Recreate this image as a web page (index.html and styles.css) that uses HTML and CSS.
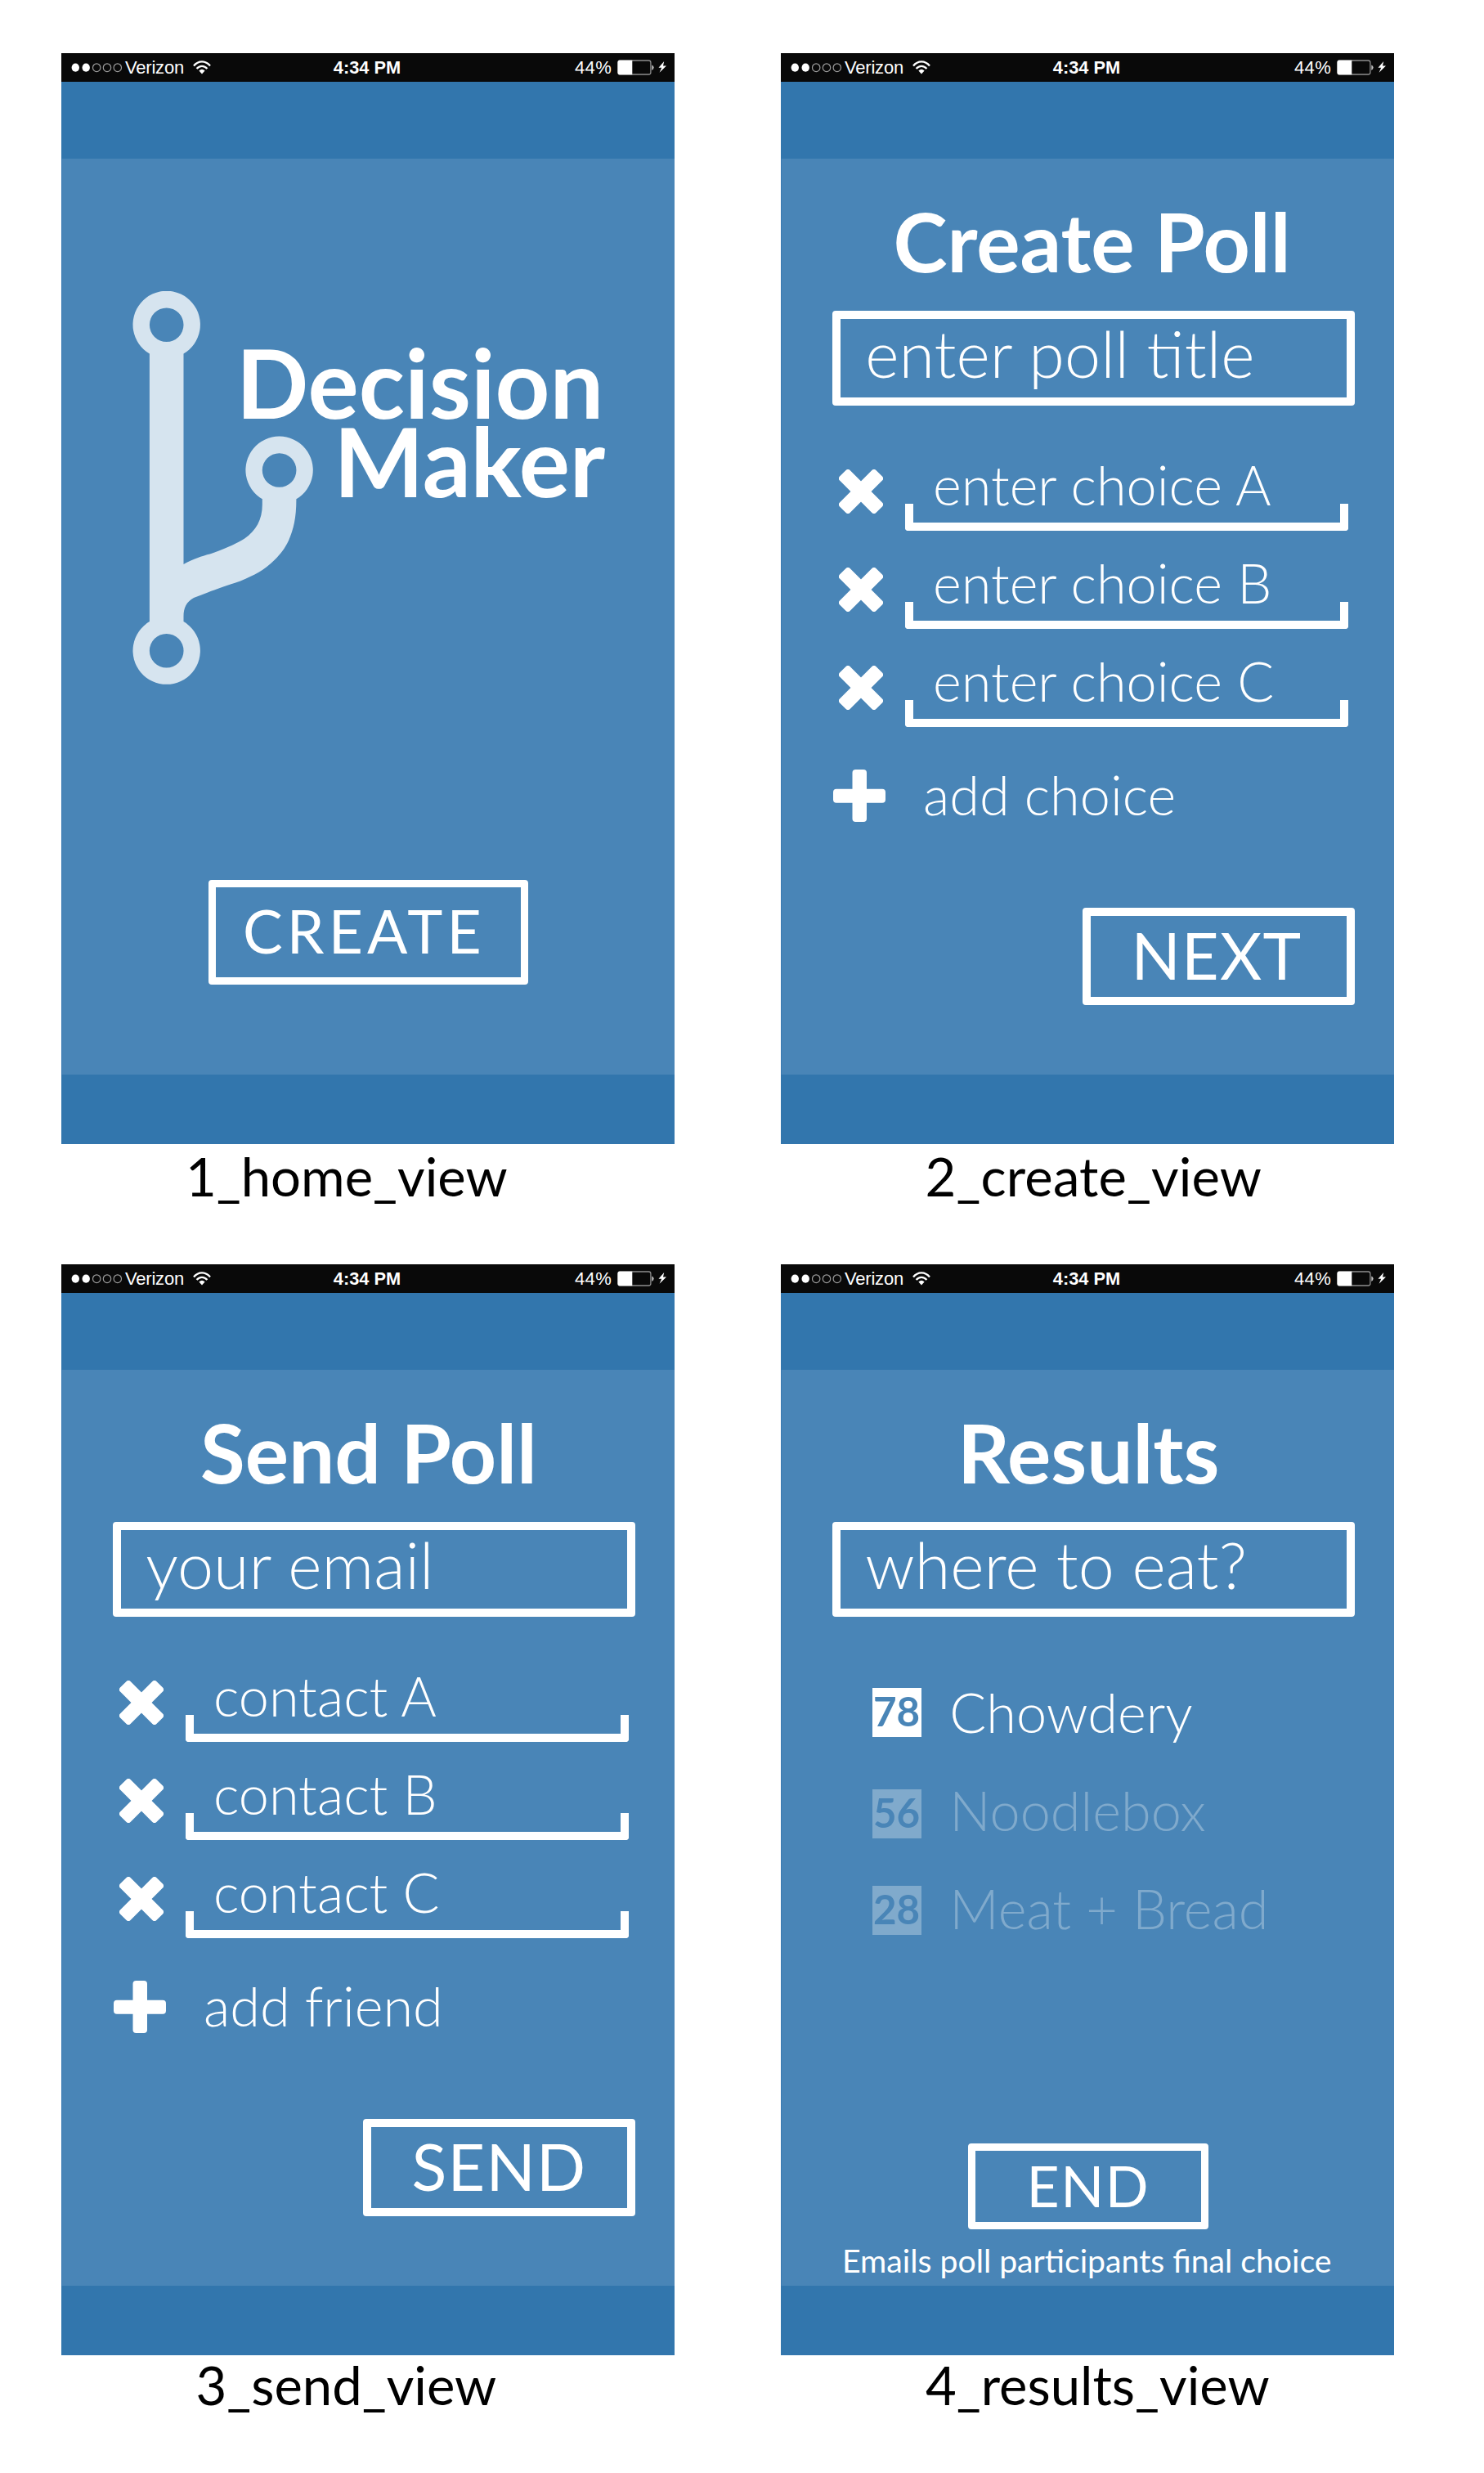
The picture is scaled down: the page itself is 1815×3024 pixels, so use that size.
FILE: index.html
```html
<!DOCTYPE html>
<html lang="en">
<head>
<meta charset="utf-8">
<title>Decision Maker views</title>
<link rel="stylesheet" href="styles.css">
</head>
<body>
<svg class="defs" aria-hidden="true">
  <symbol id="signal" viewBox="0 0 63 14">
    <g fill="#fff"><ellipse cx="5.3" cy="6.7" rx="4.7" ry="5.1"/><ellipse cx="18.2" cy="6.7" rx="4.7" ry="5.1"/></g>
    <g fill="none" stroke="#9c9c9c" stroke-width="1.2"><ellipse cx="31.2" cy="6.7" rx="4.700" ry="4.9"/><ellipse cx="44" cy="6.7" rx="4.7" ry="4.9"/><ellipse cx="56.8" cy="6.7" rx="4.7" ry="4.9"/></g>
  </symbol>
  <symbol id="wifi" viewBox="0 0 22 17">
    <g fill="none" stroke="#fff" stroke-width="2.3"><path d="M1 6.4C6.6-.4 15.4-.4 21 6.4"/><path d="M4.6 10.1C8.2 5.7 13.8 5.7 17.4 10.1"/></g>
    <path d="M7.4 12.4Q11 9.3 14.6 12.4L11 16.6Z" fill="#fff"/>
  </symbol>
  <symbol id="battery" viewBox="0 0 60 20">
    <rect x=".7" y="1" width="40.2" height="17" rx="2.5" fill="none" stroke="#8f8f8f" stroke-width="1.3"/>
    <path d="M2.5 .8H18.3V18.200H2.5Q.6 18.200.6 16V3Q.6 .8 2.5 .8Z" fill="#fff"/>
    <path d="M42.3 6.400Q44.6 7.400 44.6 9.600T42.300 12.900Z" fill="#c4c4c4"/>
    <path d="M57.200 2L50.500 9.700H54.200L51.600 15.800L60 7.400H56Z" fill="#fff"/>
  </symbol>
  <symbol id="remove" viewBox="0 0 54 54">
    <g fill="#fff"><rect x="-4.4" y="18.1" width="62.8" height="17.8" rx="3.5" transform="rotate(45 27 27)"/><rect x="-4.4" y="18.1" width="62.8" height="17.8" rx="3.5" transform="rotate(-45 27 27)"/></g>
  </symbol>
  <symbol id="add" viewBox="0 0 64 64">
    <g fill="#fff"><rect x="23.5" y="0" width="17.5" height="64" rx="4"/><rect x="0" y="23.7" width="64" height="17" rx="4"/></g>
  </symbol>
</svg>

<main class="board">
  <section class="view">
    <div class="phone">
      <div class="status"><div class="carrier"><svg class="signal"><use href="#signal"/></svg><span>Verizon</span><svg class="wifi"><use href="#wifi"/></svg></div><span class="time">4:34 PM</span><div class="power"><span>44%</span><svg class="battery"><use href="#battery"/></svg></div></div>
      <div class="topbar"></div>
      <div class="screen home">
        <div class="hero">
          <svg class="logo" viewBox="162 356 221 481">
            <path fill="#d6e4ef" fill-rule="evenodd" d="M182.900 432.500A41.200 41.200 0 1 1 224.500 432.500V690C240 681.500 251 679.500 262.400 675.500C279 669 291 664 299.200 658.500C313 648.500 320.800 636 320.800 617V610.300A41.200 41.200 0 1 1 362.400 610.300C362.400 634 359 647 353 661C348 671.500 343 677.500 336 684.500C322 698.500 312 702.500 294 710.500C270 718.500 253 724.500 237 731C228 736 224.500 743 224.500 754V760.100A41.200 41.200 0 1 1 182.900 760.100Z M203.700 376.500A20.800 20.800 0 1 0 203.700 418.100A20.800 20.800 0 1 0 203.700 376.500Z M341.600 554.200A20.800 20.800 0 1 0 341.600 595.800A20.800 20.800 0 1 0 341.600 554.200Z M203.700 775A20.800 20.800 0 1 0 203.700 816.600A20.800 20.800 0 1 0 203.700 775Z"/>
          </svg>
          <h1 class="brand"><span class="brand-a">Decision</span><span class="brand-b">Maker</span></h1>
        </div>
        <div class="button create">CREATE</div>
      </div>
      <div class="bottombar"></div>
    </div>
    <p class="caption c1">1_home_view</p>
  </section>

  <section class="view">
    <div class="phone">
      <div class="status"><div class="carrier"><svg class="signal"><use href="#signal"/></svg><span>Verizon</span><svg class="wifi"><use href="#wifi"/></svg></div><span class="time">4:34 PM</span><div class="power"><span>44%</span><svg class="battery"><use href="#battery"/></svg></div></div>
      <div class="topbar"></div>
      <div class="screen">
        <h2 class="title t-create">Create Poll</h2>
        <div class="field">enter poll title</div>
        <ul class="entries">
          <li class="entry"><svg class="remove"><use href="#remove"/></svg><div class="slot">enter choice A</div></li>
          <li class="entry"><svg class="remove"><use href="#remove"/></svg><div class="slot">enter choice B</div></li>
          <li class="entry"><svg class="remove"><use href="#remove"/></svg><div class="slot">enter choice C</div></li>
        </ul>
        <div class="add-row"><svg class="add"><use href="#add"/></svg><span>add choice</span></div>
        <div class="button forward">NEXT</div>
      </div>
      <div class="bottombar"></div>
    </div>
    <p class="caption c2">2_create_view</p>
  </section>

  <section class="view">
    <div class="phone">
      <div class="status"><div class="carrier"><svg class="signal"><use href="#signal"/></svg><span>Verizon</span><svg class="wifi"><use href="#wifi"/></svg></div><span class="time">4:34 PM</span><div class="power"><span>44%</span><svg class="battery"><use href="#battery"/></svg></div></div>
      <div class="topbar"></div>
      <div class="screen">
        <h2 class="title t-send">Send Poll</h2>
        <div class="field">your email</div>
        <ul class="entries">
          <li class="entry"><svg class="remove"><use href="#remove"/></svg><div class="slot">contact A</div></li>
          <li class="entry"><svg class="remove"><use href="#remove"/></svg><div class="slot">contact B</div></li>
          <li class="entry"><svg class="remove"><use href="#remove"/></svg><div class="slot">contact C</div></li>
        </ul>
        <div class="add-row"><svg class="add"><use href="#add"/></svg><span>add friend</span></div>
        <div class="button forward">SEND</div>
      </div>
      <div class="bottombar"></div>
    </div>
    <p class="caption c3">3_send_view</p>
  </section>

  <section class="view">
    <div class="phone">
      <div class="status"><div class="carrier"><svg class="signal"><use href="#signal"/></svg><span>Verizon</span><svg class="wifi"><use href="#wifi"/></svg></div><span class="time">4:34 PM</span><div class="power"><span>44%</span><svg class="battery"><use href="#battery"/></svg></div></div>
      <div class="topbar"></div>
      <div class="screen">
        <h2 class="title t-results">Results</h2>
        <div class="field">where to eat?</div>
        <ul class="results">
          <li class="result"><span class="score s1">78</span><span>Chowdery</span></li>
          <li class="result dim"><span class="score s2">56</span><span>Noodlebox</span></li>
          <li class="result dim"><span class="score s3">28</span><span>Meat + Bread</span></li>
        </ul>
        <div class="button end">END</div>
        <p class="note">Emails poll participants final choice</p>
      </div>
      <div class="bottombar"></div>
    </div>
    <p class="caption c4">4_results_view</p>
  </section>
</main>
</body>
</html>
```
FILE: styles.css
```css
* { box-sizing: border-box; }
html, body { margin: 0; background: #fff; }
body { font-family: Lato, sans-serif; color: #fff; }
h1, h2, p, ul { margin: 0; padding: 0; font-weight: inherit; }
ul { list-style: none; }
svg { display: block; flex: none; }
.defs { display: none; }

.board {
  display: grid;
  grid-template-columns: 750px 750px;
  grid-template-rows: 1481px 1478px;
  column-gap: 130px;
  padding: 65px 0 0 75px;
  width: 1815px;
  height: 3024px;
  white-space: nowrap;
}

.phone { display: flex; flex-direction: column; height: 1334px; background: #3276ad; }
.topbar { height: 94px; flex: none; }
.bottombar { height: 85px; flex: none; }
.screen {
  display: flex;
  flex-direction: column;
  height: 1120px;
  padding: 40px 48px 0 63px;
  background: #4985b7;
  box-shadow: inset 1px 0 #3b7bb2;
}

/* Status bar */
.status {
  display: grid;
  grid-template-columns: 1fr auto 1fr;
  height: 35px;
  flex: none;
  padding: 0 10px 0 12px;
  background: #090909;
  font: 22px/35px "Liberation Sans", Arial, sans-serif;
}
.carrier, .power { display: flex; align-items: center; }
.power { justify-content: flex-end; }
.signal { width: 63px; height: 14px; margin-right: 3px; }
.carrier span { letter-spacing: -.2px; }
.wifi { width: 22px; height: 17px; margin-left: 11.500px; }
.time { margin-left: -2px; margin-right: 2px; font-weight: 700; font-size: 21.800px; }
.power span { font-size: 22px; letter-spacing: .3px; }
.battery { width: 60px; height: 20px; margin-left: 7px; }

/* Home */
.home { padding: 162px 0 0; }
.hero { display: grid; height: 481px; }
.logo, .brand { grid-area: 1 / 1; }
.logo { width: 221px; height: 481px; margin-left: 87px; }
.brand { margin-top: 62.800px; font-size: 116.600px; font-weight: 700; line-height: 96px; }
.brand span { display: block; }
.brand-a { padding-left: 213.700px; }
.brand-b { padding-left: 333.200px; letter-spacing: -.2px; }

/* Buttons */
.button { flex: none; border: 10px solid #fff; border-radius: 4px; }
.create {
  width: 391px; height: 128px; margin: 239px 0 0 180px; padding-left: 33px;
  border-width: 9px; font-size: 73px; line-height: 107px; letter-spacing: 5.100px;
}
.forward {
  width: 333px; height: 119px; margin: 101px 0 0 306px; padding-left: 49.400px;
  font-size: 79px; line-height: 96.400px; letter-spacing: 1.300px;
}
.end {
  width: 294px; height: 105px; margin: 206px 0 0 166px; padding-left: 62.600px;
  border-width: 9px; font-size: 69.500px; line-height: 84px; letter-spacing: 1.500px;
}
.note { margin: 14px 0 0 12px; font-size: 39.200px; line-height: 48px; }

/* Forms */
.title { font-size: 99.900px; font-weight: 700; line-height: 121px; }
.t-create { padding-left: 74.500px; }
.t-send { padding-left: 107px; }
.t-results { padding-left: 153px; }
.field {
  height: 116px; margin-top: 25px; padding-left: 30.200px; flex: none;
  border: 10px solid #fff; border-radius: 4px;
  font-size: 79.100px; font-weight: 300; line-height: 84px;
}
.entries { margin-top: 58px; font-size: 66.600px; font-weight: 300; line-height: 76px; }
.entry { display: flex; height: 120px; padding-left: 8px; }
.remove { width: 54px; height: 54px; margin: 20px 27px 0 0; }
.slot { position: relative; width: 542px; height: 95px; padding-left: 34px; }
.slot::after {
  content: ""; position: absolute; inset: 62px 0 0;
  border: 10px solid #fff; border-top: 0; border-radius: 0 0 4px 4px;
}
.add-row {
  display: flex; align-items: center; gap: 46px; margin-top: 19px; padding-left: 1px;
  font-size: 66.600px; font-weight: 300; line-height: 76px;
}
.add { width: 64px; height: 64px; margin-top: 4px; }

/* Results */
.results { margin-top: 78px; padding-left: 49px; font-size: 66.600px; font-weight: 300; line-height: 76px; }
.result { display: flex; gap: 34.300px; height: 120px; }
.dim { opacity: .3; }
.score {
  width: 60px; height: 60px; padding-left: 1px; background: #fff; color: #4985b7;
  font-size: 49.300px; font-weight: 700; line-height: 57px;
}
.s1 { margin-top: 9px; }
.s2 { margin-top: 13px; }
.s3 { margin-top: 11px; }

/* Captions */
.caption { color: #000; font-size: 65.200px; line-height: 79.600px; }
.c1 { padding-left: 152px; }
.c2 { padding-left: 176.500px; letter-spacing: .15px; }
.c3 { margin-top: -3px; padding-left: 164.500px; }
.c4 { margin-top: -3px; padding-left: 177px; }
```
